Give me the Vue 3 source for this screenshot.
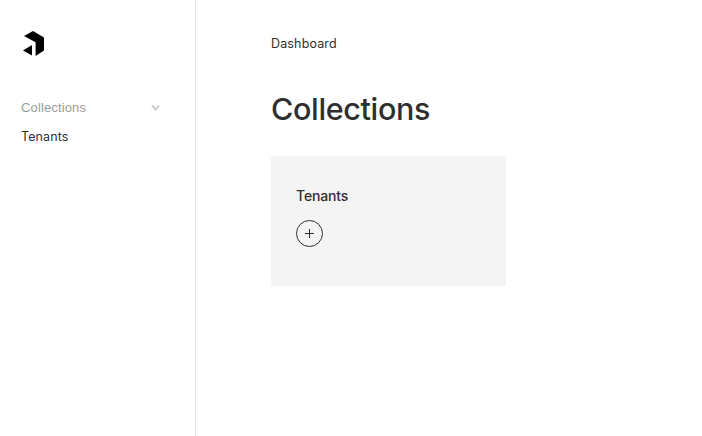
<script setup>
const navItems = ['Tenants']
const cards = ['Tenants']
</script>

<template>
  <div class="layout">
    <aside class="sidebar">
      <svg class="logo" width="21" height="26" viewBox="0 0 21 26">
        <path d="M10 0 21 6.5V19.5L12.6 25V11.3L1 5.1Z" />
        <path d="M9 14V24.5L0 19.4Z" />
      </svg>
      <button class="group">
        <span>Collections</span>
        <svg width="9" height="8" viewBox="0 0 9 8">
          <path d="M1 1.5 4.5 5.5 8 1.5" />
        </svg>
      </button>
      <nav>
        <a v-for="item in navItems" :key="item" class="link">{{ item }}</a>
      </nav>
    </aside>
    <main class="content">
      <div class="crumb">Dashboard</div>
      <h1 class="title">Collections</h1>
      <section v-for="card in cards" :key="card" class="card">
        <h2 class="card-title">{{ card }}</h2>
        <button class="add" aria-label="Add">
          <svg width="27" height="27" viewBox="0 0 27 27">
            <circle cx="13.5" cy="13.5" r="13" />
            <path d="M9 13.5H18M13.5 9V18" />
          </svg>
        </button>
      </section>
    </main>
  </div>
</template>

<style>
body {
  background: #fff;
  overflow: hidden;
}
</style>

<style scoped>
.layout {
  display: flex;
  height: 100vh;
  color: #2f2f2f;
  font-family: Inter, "Liberation Sans", sans-serif;
}
.sidebar {
  box-sizing: border-box;
  width: 196px;
  flex: none;
  padding: 31px 35px 0 21px;
  border-right: 1px solid #e6e6e6;
}
.logo {
  display: block;
  margin-left: 2px;
  fill: #000;
}
button {
  padding: 0;
  border: 0;
  background: none;
}
.group {
  display: flex;
  align-items: center;
  justify-content: space-between;
  width: 100%;
  height: 20px;
  margin-top: 41px;
  color: #9a9a9a;
  font: 13px/20px "Liberation Sans", Arial, sans-serif;
  letter-spacing: 0.13px;
}
.group svg {
  fill: none;
  stroke: #d0d0d0;
  stroke-width: 2.2;
}
.link {
  display: block;
  margin-top: 9px;
  font-size: 12.5px;
  line-height: 20px;
  letter-spacing: 0.1px;
}
.content {
  padding: 34px 0 0 75px;
}
.crumb {
  font-size: 12.5px;
  line-height: 20px;
  letter-spacing: 0.15px;
}
.title {
  margin: 35px 0 0;
  font-size: 30.5px;
  line-height: 40px;
  font-weight: 550;
  letter-spacing: -0.35px;
}
.card {
  box-sizing: border-box;
  width: 235px;
  height: 130px;
  margin-top: 27px;
  padding: 30px 25px;
  background: #f4f4f4;
}
.card-title {
  margin: 0 0 14px;
  font-size: 14px;
  line-height: 20px;
  font-weight: 550;
  letter-spacing: -0.15px;
}
.add {
  display: block;
}
.add svg {
  display: block;
  fill: none;
  stroke: #2f2f2f;
}
</style>
